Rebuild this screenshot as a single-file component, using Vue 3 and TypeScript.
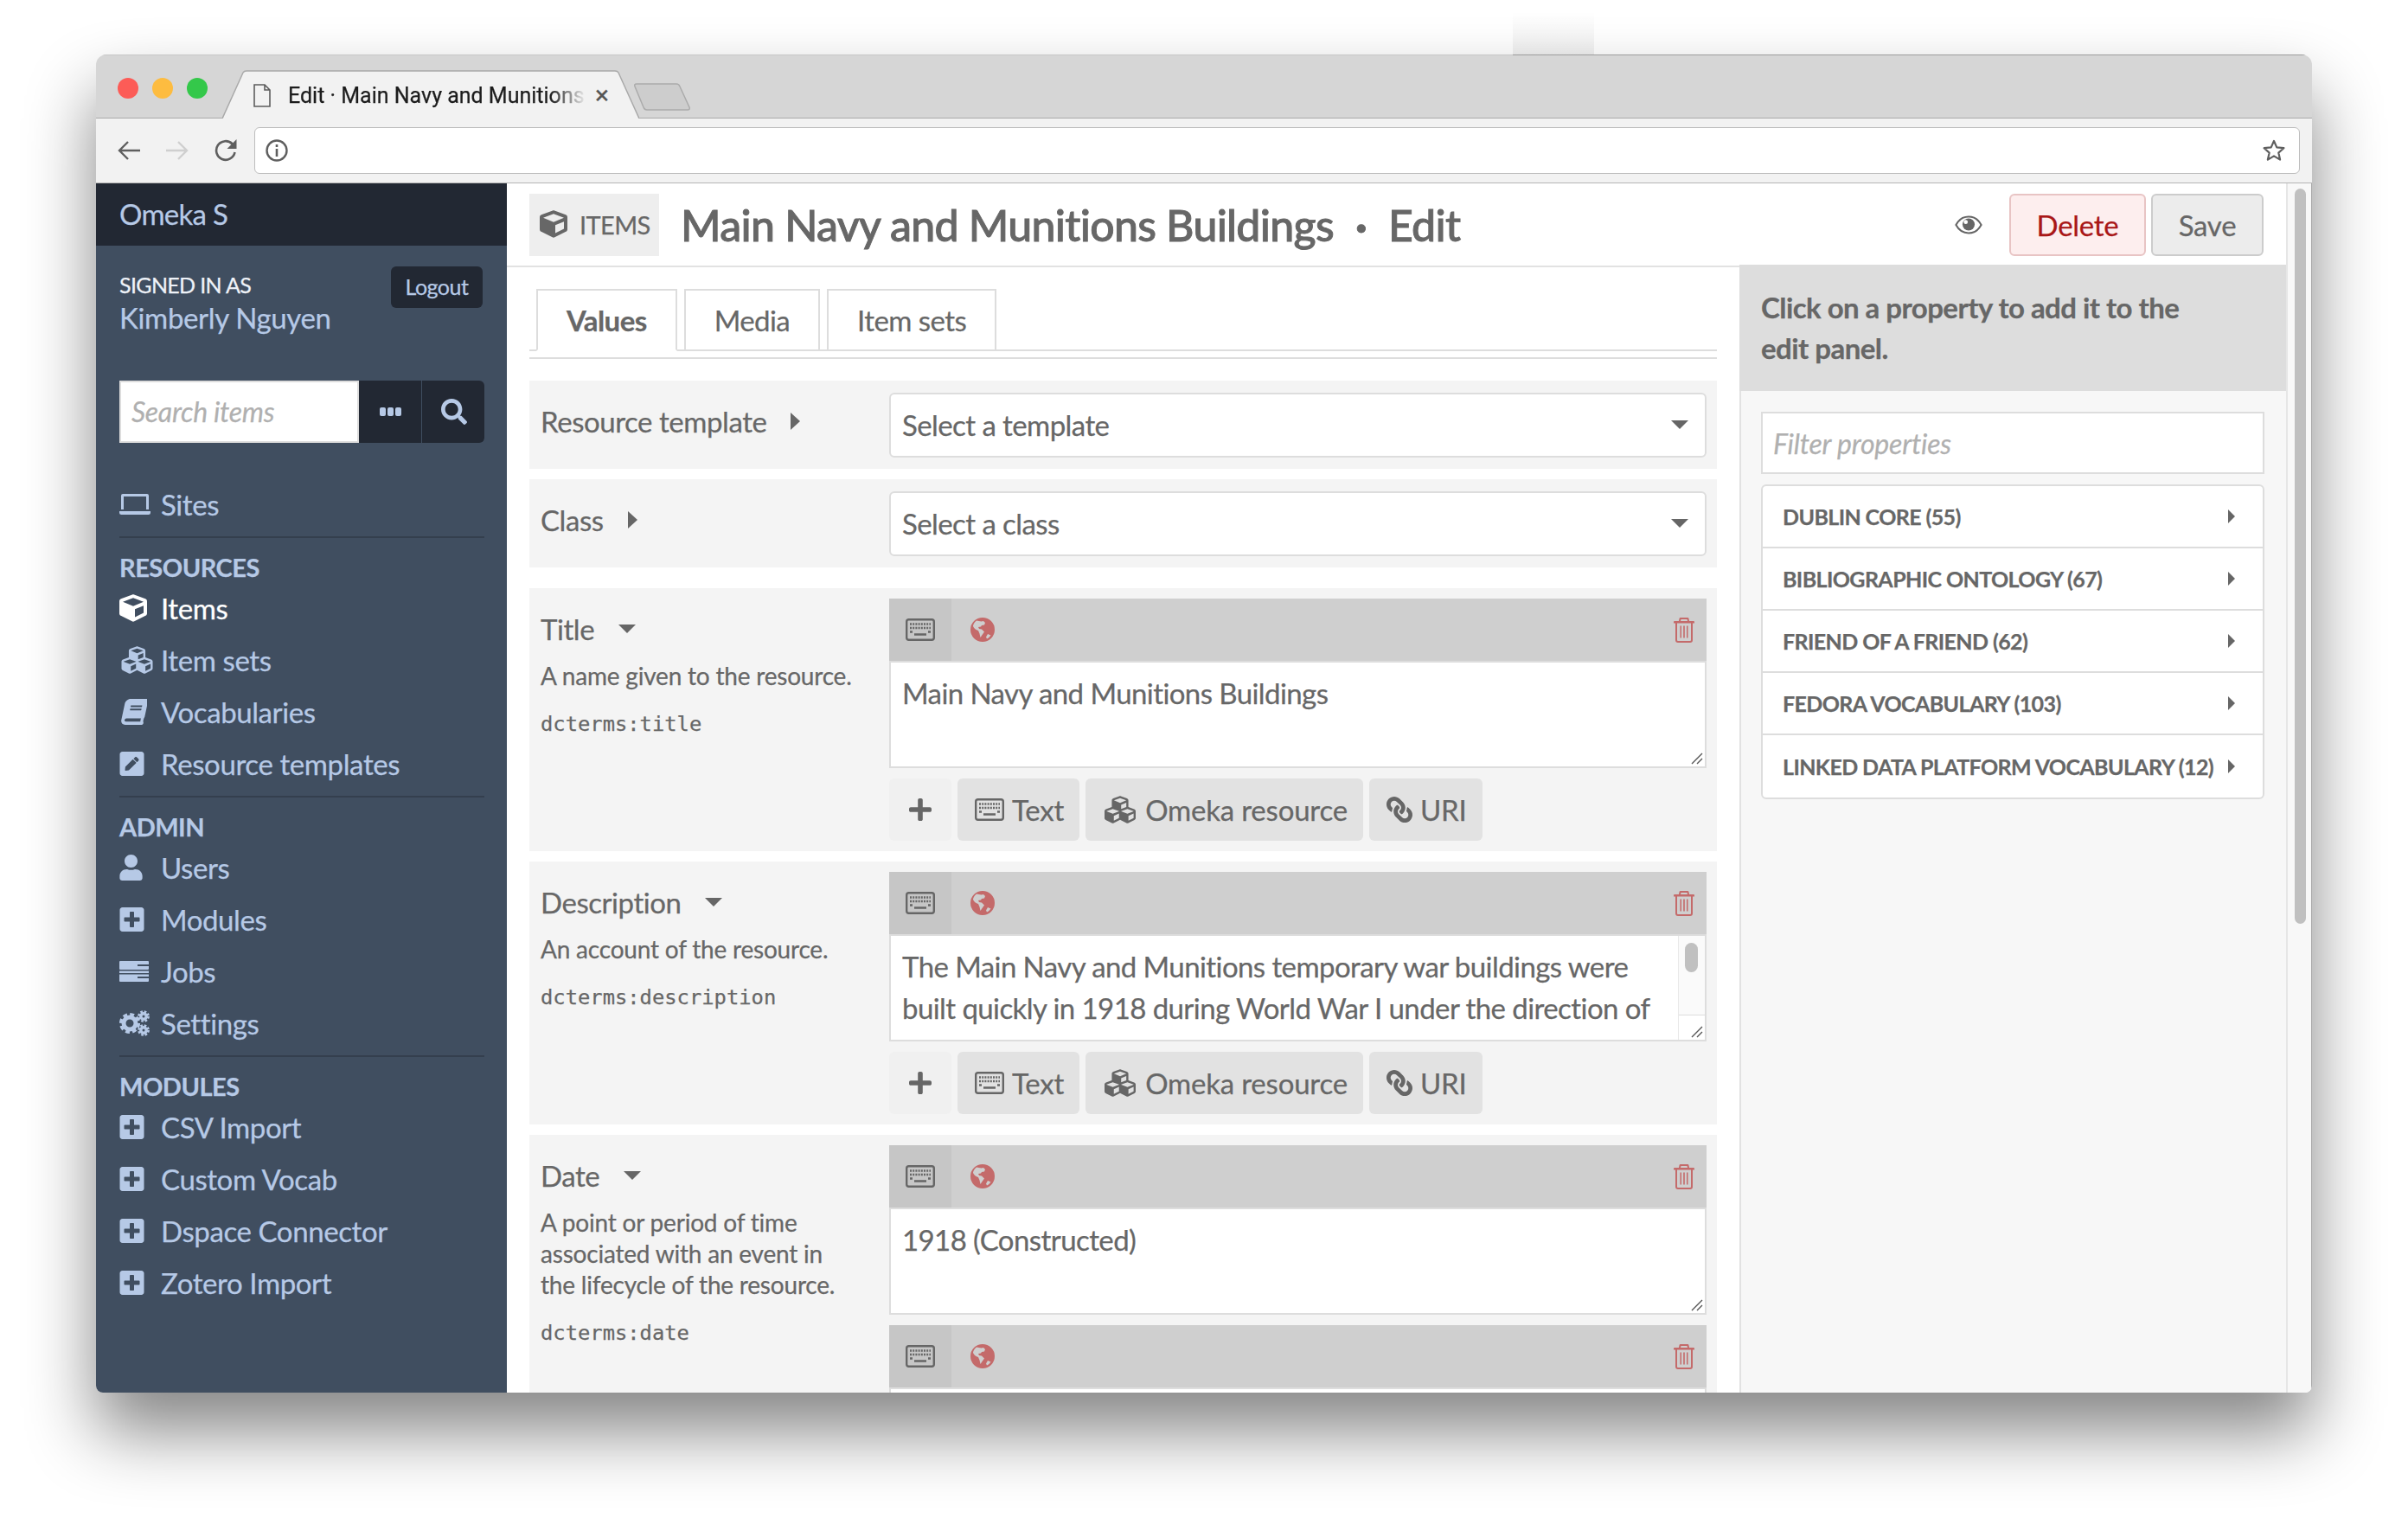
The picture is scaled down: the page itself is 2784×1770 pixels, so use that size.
<script setup lang="ts">
interface NavItem {
  label: string
  icon: string
  active?: boolean
}

interface NavGroup {
  title?: string
  items: NavItem[]
}

interface Field {
  label: string
  desc: string[]
  term: string
  values: string[][]
  scroll?: boolean
  noButtons?: boolean
}

const navGroups: NavGroup[] = [
  { items: [{ label: 'Sites', icon: 'laptop' }] },
  {
    title: 'Resources',
    items: [
      { label: 'Items', icon: 'cube', active: true },
      { label: 'Item sets', icon: 'cubes' },
      { label: 'Vocabularies', icon: 'book' },
      { label: 'Resource templates', icon: 'pen' },
    ],
  },
  {
    title: 'Admin',
    items: [
      { label: 'Users', icon: 'user' },
      { label: 'Modules', icon: 'plus-square' },
      { label: 'Jobs', icon: 'server' },
      { label: 'Settings', icon: 'cogs' },
    ],
  },
  {
    title: 'Modules',
    items: [
      { label: 'CSV Import', icon: 'plus-square' },
      { label: 'Custom Vocab', icon: 'plus-square' },
      { label: 'Dspace Connector', icon: 'plus-square' },
      { label: 'Zotero Import', icon: 'plus-square' },
    ],
  },
]

const fields: Field[] = [
  {
    label: 'Title',
    desc: ['A name given to the resource.'],
    term: 'dcterms:title',
    values: [['Main Navy and Munitions Buildings']],
  },
  {
    label: 'Description',
    desc: ['An account of the resource.'],
    term: 'dcterms:description',
    values: [
      [
        'The Main Navy and Munitions temporary war buildings were',
        'built quickly in 1918 during World War I under the direction of',
      ],
    ],
    scroll: true,
  },
  {
    label: 'Date',
    desc: ['A point or period of time', 'associated with an event in', 'the lifecycle of the resource.'],
    term: 'dcterms:date',
    values: [['1918 (Constructed)'], ['']],
    noButtons: true,
  },
]

const vocabularies = [
  'Dublin Core (55)',
  'Bibliographic Ontology (67)',
  'Friend of a Friend (62)',
  'Fedora Vocabulary (103)',
  'Linked Data Platform Vocabulary (12)',
]

const tabs = ['Values', 'Media', 'Item sets']
</script>

<template>
  <div class="page">
    <svg class="defs" width="0" height="0" aria-hidden="true">
      <symbol id="i-cube" viewBox="0 0 512 512">
        <path d="M239.1 6.3l-208 78c-18.7 7-31.1 25-31.1 45v225.1c0 18.2 10.3 34.8 26.5 42.9l208 104c13.5 6.8 29.4 6.8 42.9 0l208-104c16.3-8.1 26.5-24.8 26.5-42.9V129.3c0-20-12.4-37.9-31.1-44.9l-208-78C262 2.2 250 2.2 239.1 6.3zM256 68.4l192 72v1.1l-192 78-192-78v-1.1l192-72zm32 356V275.5l160-65v133.9l-160 80z" />
      </symbol>
      <symbol id="i-cubes" viewBox="0 0 512 512">
        <path d="M488.6 250.2L392 214V105.5c0-15-9.3-28.4-23.4-33.7l-100-37.5c-8.1-3.1-17.1-3.1-25.3 0l-100 37.5c-14.1 5.3-23.4 18.7-23.4 33.7V214l-96.6 36.2C9.3 255.5 0 268.9 0 283.9V394c0 13.6 7.7 26.1 19.9 32.2l100 50c10.1 5.1 22.1 5.1 32.2 0l103.9-52 103.9 52c10.1 5.1 22.1 5.1 32.2 0l100-50c12.2-6.1 19.9-18.6 19.9-32.2V283.9c0-15-9.3-28.4-23.4-33.7zM358 214.8l-85 31.9v-68.2l85-37v73.3zM154 104.1l102-38.2 102 38.2v.6l-102 41.4-102-41.4v-.6zm84 291.1l-85 42.5v-79.1l85-38.8v75.4zm0-112l-102 41.4-102-41.4v-.6l102-38.2 102 38.2v.6zm240 112l-85 42.5v-79.1l85-38.8v75.4zm0-112l-102 41.4-102-41.4v-.6l102-38.2 102 38.2v.6z" />
      </symbol>
      <symbol id="i-book" viewBox="0 0 512 512">
        <path transform="translate(110 0) skewX(-12)" d="M448 360V24c0-13.3-10.7-24-24-24H96C43 0 0 43 0 96v320c0 53 43 96 96 96h328c13.3 0 24-10.7 24-24v-16c0-7.5-3.5-14.3-8.9-18.7-4.2-15.4-4.2-59.3 0-74.7 5.4-4.3 8.9-11.1 8.9-18.6zM128 134c0-3.3 2.7-6 6-6h212c3.3 0 6 2.7 6 6v20c0 3.3-2.7 6-6 6H134c-3.3 0-6-2.7-6-6v-20zm0 64c0-3.3 2.7-6 6-6h212c3.3 0 6 2.7 6 6v20c0 3.3-2.7 6-6 6H134c-3.3 0-6-2.7-6-6v-20zm253.4 250H96c-17.7 0-32-14.3-32-32 0-17.6 14.4-32 32-32h285.4c-1.9 17.1-1.9 46.9 0 64z" />
      </symbol>
      <symbol id="i-pen" viewBox="0 0 448 512">
        <path d="M400 480H48c-26.5 0-48-21.5-48-48V80c0-26.5 21.5-48 48-48h352c26.5 0 48 21.5 48 48v352c0 26.5-21.5 48-48 48zM238.1 177.9L102.4 313.6l-6.3 57.1c-.8 7.6 5.6 14.1 13.3 13.3l57.1-6.3L302.2 242c2.3-2.3 2.3-6.1 0-8.5L246.7 178c-2.5-2.4-6.3-2.4-8.6-.1zM345 165.1L314.9 135c-9.4-9.4-24.6-9.4-33.9 0l-23.1 23.1c-2.3 2.3-2.3 6.1 0 8.5l55.5 55.5c2.3 2.3 6.1 2.3 8.5 0L345 199c9.3-9.3 9.3-24.5 0-33.9z" />
      </symbol>
      <symbol id="i-user" viewBox="0 0 448 512">
        <path d="M224 256c70.7 0 128-57.3 128-128S294.7 0 224 0 96 57.3 96 128s57.3 128 128 128zm89.6 32h-16.7c-22.2 10.2-46.9 16-72.9 16s-50.6-5.8-72.9-16h-16.7C60.2 288 0 348.2 0 422.4V464c0 26.5 21.5 48 48 48h352c26.5 0 48-21.5 48-48v-41.6c0-74.2-60.2-134.4-134.4-134.4z" />
      </symbol>
      <symbol id="i-plus-square" viewBox="0 0 448 512">
        <path d="M400 32H48C21.5 32 0 53.5 0 80v352c0 26.5 21.5 48 48 48h352c26.5 0 48-21.5 48-48V80c0-26.5-21.5-48-48-48zm-32 252c0 6.6-5.4 12-12 12h-92v92c0 6.6-5.4 12-12 12h-56c-6.6 0-12-5.4-12-12v-92H92c-6.6 0-12-5.4-12-12v-56c0-6.6 5.4-12 12-12h92v-92c0-6.6 5.4-12 12-12h56c6.6 0 12 5.4 12 12v92h92c6.6 0 12 5.4 12 12v56z" />
      </symbol>
      <symbol id="i-search" viewBox="0 0 512 512">
        <path d="M505 442.7L405.3 343c-4.5-4.5-10.6-7-17-7H372c27.6-35.3 44-79.7 44-128C416 93.1 322.9 0 208 0S0 93.1 0 208s93.1 208 208 208c48.3 0 92.7-16.4 128-44v16.3c0 6.4 2.5 12.5 7 17l99.7 99.7c9.4 9.4 24.6 9.4 33.9 0l28.3-28.3c9.4-9.4 9.4-24.6.1-34zM208 336c-70.7 0-128-57.2-128-128 0-70.7 57.2-128 128-128 70.7 0 128 57.2 128 128 0 70.7-57.2 128-128 128z" />
      </symbol>
      <symbol id="i-plus" viewBox="0 0 448 512">
        <path d="M416 208H272V64c0-17.67-14.33-32-32-32h-32c-17.67 0-32 14.33-32 32v144H32c-17.67 0-32 14.33-32 32v32c0 17.67 14.33 32 32 32h144v144c0 17.67 14.33 32 32 32h32c17.67 0 32-14.33 32-32V304h144c17.67 0 32-14.33 32-32v-32c0-17.67-14.33-32-32-32z" />
      </symbol>
      <symbol id="i-link" viewBox="0 0 512 512">
        <path transform="matrix(-1 0 0 1 512 0)" d="M326.612 185.391c59.747 59.809 58.927 155.698.36 214.59-.11.12-.24.25-.36.37l-67.2 67.2c-59.27 59.27-155.699 59.262-214.96 0-59.27-59.26-59.27-155.7 0-214.96l37.106-37.106c9.84-9.84 26.786-3.3 27.294 10.606.648 17.722 3.826 35.527 9.69 52.721 1.986 5.822.567 12.262-3.783 16.612l-13.087 13.087c-28.026 28.026-28.905 73.66-1.155 101.96 28.024 28.579 74.086 28.749 102.325.51l67.2-67.19c28.191-28.191 28.073-73.757 0-101.83-3.701-3.694-7.429-6.564-10.341-8.569a16.037 16.037 0 0 1-6.947-12.606c-.396-10.567 3.348-21.456 11.698-29.806l21.054-21.055c5.521-5.521 14.182-6.199 20.584-1.731a152.482 152.482 0 0 1 20.522 17.197zM467.547 44.449c-59.261-59.262-155.69-59.27-214.96 0l-67.2 67.2c-.12.12-.25.25-.36.37-58.566 58.892-59.387 154.781.36 214.59a152.454 152.454 0 0 0 20.521 17.196c6.402 4.468 15.064 3.789 20.584-1.731l21.054-21.055c8.35-8.35 12.094-19.239 11.698-29.806a16.037 16.037 0 0 0-6.947-12.606c-2.912-2.005-6.64-4.875-10.341-8.569-28.073-28.073-28.191-73.639 0-101.83l67.2-67.19c28.239-28.239 74.3-28.069 102.325.51 27.75 28.3 26.872 73.934-1.155 101.96l-13.087 13.087c-4.35 4.35-5.769 10.79-3.783 16.612 5.864 17.194 9.042 34.999 9.69 52.721.509 13.906 17.454 20.446 27.294 10.606l37.106-37.106c59.271-59.259 59.271-155.699.001-214.959z" />
      </symbol>
      <symbol id="i-laptop" viewBox="0 0 36 24">
        <path d="M4 0h28a2 2 0 0 1 2 2v16h-3V3H5v15H2V2a2 2 0 0 1 2-2zM0 20h36v1.500A2.500 2.500 0 0 1 33.500 24h-31A2.500 2.500 0 0 1 0 21.500z" />
      </symbol>
      <symbol id="i-server" viewBox="0 0 34 24">
        <path d="M1 0h32a1 1 0 0 1 1 1v3H21v2h13v3a1 1 0 0 1-1 1H1a1 1 0 0 1-1-1V1a1 1 0 0 1 1-1zM0 11.500h34V14H0zM0 15.500h34V18H21v2h13v3a1 1 0 0 1-1 1H1a1 1 0 0 1-1-1z" />
      </symbol>
      <symbol id="i-cogs" viewBox="0 0 36 30">
        <circle cx="12" cy="15" r="7" fill="none" stroke="currentColor" stroke-width="5" />
        <circle cx="12" cy="15" r="10.200" fill="none" stroke="currentColor" stroke-width="3.800" stroke-dasharray="4.800 3.200" />
        <circle cx="28" cy="7" r="3.200" fill="none" stroke="currentColor" stroke-width="3.400" />
        <circle cx="28" cy="7" r="5.600" fill="none" stroke="currentColor" stroke-width="2.600" stroke-dasharray="2.600 1.800" />
        <circle cx="28" cy="23" r="3.200" fill="none" stroke="currentColor" stroke-width="3.400" />
        <circle cx="28" cy="23" r="5.600" fill="none" stroke="currentColor" stroke-width="2.600" stroke-dasharray="2.600 1.800" />
      </symbol>
      <symbol id="i-keyboard" viewBox="0 0 34 26">
        <rect x="1.200" y="1.200" width="31.600" height="23.600" rx="2.500" fill="none" stroke="currentColor" stroke-width="2.400" />
        <path d="M5 6.500h24M5 11h24" fill="none" stroke="currentColor" stroke-width="2.500" stroke-dasharray="2 1.200" />
        <path d="M5 15.500h3M26 15.500h3M10 18.500h14" fill="none" stroke="currentColor" stroke-width="2.500" />
      </symbol>
      <symbol id="i-globe" viewBox="0 0 28 28">
        <path fill-rule="evenodd" d="M14 0a14 14 0 1 1 0 28a14 14 0 0 1 0-28zM7 3.500C4.500 5.500 3 8 3 10c1 2.500 3.500 4.500 6 5l1.500 3.500 1 4.500 2-3 2.500-3.500-3-3-3-.5-1-2 3-.5 1-1.500 3-.5 1-2.500-2-2-2.500.5zM20 19l-2 3.500 1 2c2-1 3.500-2.500 4.500-4z" />
      </symbol>
      <symbol id="i-trash" viewBox="0 0 24 30">
        <path d="M8 1h8a1.500 1.500 0 0 1 1.500 1.300l.5 2.700h5a1 1 0 0 1 1 1v1.500H22V27a3 3 0 0 1-3 3H5a3 3 0 0 1-3-3V7.500H0V6a1 1 0 0 1 1-1h5l.5-2.700A1.500 1.500 0 0 1 8 1zm.5 2L8 5h8l-.5-2zM4 7.500V27a1 1 0 0 0 1 1h14a1 1 0 0 0 1-1V7.500zM7.500 10.500h1.500v14H7.500zM11.200 10.500h1.600v14h-1.600zM15 10.500h1.500v14H15z" />
      </symbol>
    </svg>

    <div class="top-smudge"></div>

    <div class="window">
      <div class="tabstrip">
        <div class="lights">
          <span class="light red"></span>
          <span class="light yellow"></span>
          <span class="light green"></span>
        </div>
        <div class="browser-tab">
          <svg class="tab-shape" viewBox="0 0 482 56" preserveAspectRatio="none">
            <path d="M0 56 L24 3 Q25 1 28 1 L454 1 Q457 1 458 3 L482 56" fill="#f2f2f2" stroke="#a9a9a9" stroke-width="1.500" />
          </svg>
          <svg class="file-icon" viewBox="0 0 20 27">
            <path d="M1 1h12l6 6v19H1zM13 1v6h6" fill="none" stroke="#5c5c5c" stroke-width="1.600" />
          </svg>
          <span class="tab-title">Edit · Main Navy and Munitions</span>
          <span class="tab-close">×</span>
        </div>
        <svg class="new-tab" viewBox="0 0 66 32">
          <path d="M3 1h46q3 0 4 3l11 24q1 3-2 3H15q-3 0-4-3L1 4q-1-3 2-3z" fill="#cdcdcd" stroke="#ababab" stroke-width="1.500" />
        </svg>
      </div>

      <div class="toolbar">
        <svg class="nav-btn" viewBox="0 0 28 24">
          <path d="M27 12H3M13 2 3 12l10 10" fill="none" stroke="#5f5f5f" stroke-width="2.400" />
        </svg>
        <svg class="nav-btn" viewBox="0 0 28 24">
          <path d="M1 12h24M15 2l10 10-10 10" fill="none" stroke="#cfcfcf" stroke-width="2.400" />
        </svg>
        <svg class="nav-btn reload" viewBox="0 0 28 28">
          <path d="M24.500 16a10.800 10.800 0 1 1-2.800-9.500L24 9" fill="none" stroke="#5f5f5f" stroke-width="2.600" />
          <path d="M26.500 1v11H15.500z" fill="#5f5f5f" />
        </svg>
        <div class="omnibox">
          <svg class="info" viewBox="0 0 26 26">
            <circle cx="13" cy="13" r="11.500" fill="none" stroke="#5f5f5f" stroke-width="2.400" />
            <path d="M11.700 6h2.600v3h-2.600zM11.700 11h2.600v9h-2.600z" fill="#5f5f5f" />
          </svg>
          <svg class="star" viewBox="0 0 28 28">
            <path d="M14 3l3.300 7.400 8.100.8-6.100 5.400 1.800 8L14 20.400l-7.100 4.200 1.800-8-6.100-5.400 8.100-.8z" fill="none" stroke="#5f5f5f" stroke-width="2.200" stroke-linejoin="round" />
          </svg>
        </div>
      </div>

      <div class="app">
        <aside class="sidebar">
          <div class="brand">Omeka S</div>
          <div class="user">
            <div>
              <div class="signed">Signed in as</div>
              <div class="username">Kimberly Nguyen</div>
            </div>
            <button class="logout">Logout</button>
          </div>
          <div class="search">
            <div class="search-input">Search items</div>
            <div class="search-more"><span></span><span></span><span></span></div>
            <div class="search-go"><svg class="ic-search"><use href="#i-search" /></svg></div>
          </div>
          <nav class="nav">
            <div v-for="(group, i) in navGroups" :key="i" class="nav-group">
              <h4 v-if="group.title" class="nav-title">{{ group.title }}</h4>
              <a v-for="item in group.items" :key="item.label" class="nav-item" :class="{ active: item.active }">
                <span class="nav-icon"><svg :class="'ic-' + item.icon"><use :href="'#i-' + item.icon" /></svg></span>
                {{ item.label }}
              </a>
            </div>
          </nav>
        </aside>

        <div class="main">
          <header class="topbar">
            <div class="badge"><svg class="ic-badge"><use href="#i-cube" /></svg>Items</div>
            <h1 class="title">Main Navy and Munitions Buildings<span class="dot">·</span>Edit</h1>
            <svg class="eye" viewBox="0 0 34 24">
              <path d="M1.500 12C5 5.500 10.500 2 17 2s12 3.500 15.500 10C29 18.500 23.500 22 17 22S5 18.500 1.500 12z" fill="none" stroke="#666" stroke-width="2.200" />
              <circle cx="17" cy="11.500" r="7.500" fill="#666" />
              <circle cx="13.500" cy="8.500" r="2.500" fill="#fff" />
            </svg>
            <button class="btn-delete">Delete</button>
            <button class="btn-save">Save</button>
          </header>

          <div class="columns">
            <section class="form">
              <div class="tabs">
                <a v-for="(tab, i) in tabs" :key="tab" class="tab" :class="{ current: i === 0 }">{{ tab }}</a>
              </div>

              <div class="row row-select">
                <div class="label-col"><span class="label">Resource template<i class="caret-right"></i></span></div>
                <div class="select">Select a template<i class="caret-down small"></i></div>
              </div>
              <div class="row row-select">
                <div class="label-col"><span class="label">Class<i class="caret-right"></i></span></div>
                <div class="select">Select a class<i class="caret-down small"></i></div>
              </div>

              <div v-for="(field, f) in fields" :key="field.label" class="row row-field" :class="{ first: f === 0 }">
                <div class="label-col">
                  <div class="label field-label">{{ field.label }}<i class="caret-down"></i></div>
                  <p class="desc"><span v-for="line in field.desc" :key="line">{{ line }}<br /></span></p>
                  <code class="term">{{ field.term }}</code>
                </div>
                <div class="values">
                  <div v-for="(value, v) in field.values" :key="v" class="value">
                    <div class="value-head">
                      <span class="lang"><svg class="ic-keyboard"><use href="#i-keyboard" /></svg></span>
                      <svg class="ic-globe"><use href="#i-globe" /></svg>
                      <svg class="ic-trash"><use href="#i-trash" /></svg>
                    </div>
                    <div class="textarea">
                      <div v-for="line in value" :key="line" class="line">{{ line }}</div>
                      <div v-if="field.scroll" class="ta-scroll"><span></span></div>
                      <svg class="grip" viewBox="0 0 16 16">
                        <path d="M15 3 3 15M15 9l-6 6" fill="none" stroke="#555" stroke-width="1.400" />
                      </svg>
                    </div>
                  </div>
                  <div v-if="!field.noButtons" class="add-row">
                    <span class="add plus"><svg class="ic-plus"><use href="#i-plus" /></svg></span>
                    <span class="add"><svg class="ic-keyboard"><use href="#i-keyboard" /></svg>Text</span>
                    <span class="add"><svg class="ic-cubes"><use href="#i-cubes" /></svg>Omeka resource</span>
                    <span class="add"><svg class="ic-link"><use href="#i-link" /></svg>URI</span>
                  </div>
                </div>
              </div>
            </section>

            <aside class="panel">
              <div class="panel-head">Click on a property to add it to the edit panel.</div>
              <div class="panel-body">
                <div class="filter">Filter properties</div>
                <ul class="vocab-list">
                  <li v-for="vocab in vocabularies" :key="vocab" class="vocab">
                    {{ vocab }}<i class="caret-right small"></i>
                  </li>
                </ul>
              </div>
            </aside>
          </div>
        </div>

        <div class="page-scroll"><span></span></div>
      </div>
    </div>
  </div>
</template>

<style>
html,
body {
  margin: 0;
  background: #fff;
}
</style>

<style scoped>
.page {
  position: relative;
  box-sizing: border-box;
  width: 2784px;
  height: 1770px;
  padding: 63px 0 0 111px;
  overflow: hidden;
  background: #fff;
  font-family: Lato, "Liberation Sans", sans-serif;
  color: #676767;
  -webkit-text-stroke: 0.25px currentColor;
}

.defs {
  position: absolute;
}

.top-smudge {
  position: absolute;
  top: 13px;
  left: 1749px;
  width: 94px;
  height: 50px;
  background: linear-gradient(180deg, transparent, rgba(0, 0, 0, 0.06));
}

.window {
  position: relative;
  display: flex;
  flex-direction: column;
  width: 2562px;
  height: 1547px;
  border-radius: 12px 12px 8px 8px;
  background: #fff;
  box-shadow: 0 45px 80px rgba(0, 0, 0, 0.48);
  overflow: hidden;
}

/* browser chrome */
.tabstrip {
  display: flex;
  flex: none;
  align-items: flex-end;
  box-sizing: border-box;
  height: 74px;
  border-bottom: 1px solid #a9a9a9;
  background: linear-gradient(90deg, #c8c8c8 1638px, #9c9c9c 1638px) top / 100% 1px no-repeat, #d6d6d6;
}

.lights {
  display: flex;
  align-self: flex-start;
  gap: 16px;
  margin: 27px 0 0 25px;
}

.light {
  width: 24px;
  height: 24px;
  border-radius: 50%;
}

.light.red {
  background: #fc5c57;
}

.light.yellow {
  background: #fdbc40;
}

.light.green {
  background: #34c84a;
}

.browser-tab {
  position: relative;
  display: flex;
  align-items: center;
  box-sizing: border-box;
  width: 482px;
  height: 56px;
  margin: 0 0 -1px 17px;
  padding: 2px 0 0 36px;
}

.tab-shape {
  position: absolute;
  inset: 0;
  width: 100%;
  height: 100%;
}

.file-icon {
  position: relative;
  width: 20px;
  height: 27px;
  margin-right: 20px;
}

.tab-title {
  position: relative;
  width: 345px;
  overflow: hidden;
  font-family: Roboto, sans-serif;
  font-size: 25px;
  color: #1d1d1d;
  white-space: nowrap;
  -webkit-mask-image: linear-gradient(90deg, #000 88%, transparent);
  mask-image: linear-gradient(90deg, #000 88%, transparent);
}

.tab-close {
  position: relative;
  margin-left: 10px;
  font-family: Roboto, sans-serif;
  font-size: 30px;
  line-height: 1;
  color: #555;
}

.new-tab {
  width: 66px;
  height: 32px;
  margin: 0 0 8px -6px;
}

.toolbar {
  display: flex;
  flex: none;
  align-items: center;
  box-sizing: border-box;
  height: 75px;
  padding: 0 14px 0 24px;
  border-bottom: 1px solid #b5b5b5;
  background: #f2f2f2;
}

.nav-btn {
  width: 28px;
  height: 26px;
  margin-right: 28px;
}

.nav-btn.reload {
  height: 28px;
}

.omnibox {
  display: flex;
  flex: 1;
  align-items: center;
  justify-content: space-between;
  box-sizing: border-box;
  height: 54px;
  margin-left: -9px;
  padding: 0 15px 0 12px;
  border: 1px solid #bdbdbd;
  border-radius: 6px;
  background: #fff;
}

.info {
  width: 26px;
  height: 26px;
}

.star {
  width: 28px;
  height: 28px;
}

.app {
  display: flex;
  flex: 1;
  min-height: 0;
}

/* sidebar */
.sidebar {
  flex: none;
  box-sizing: border-box;
  width: 475px;
  background: #404e60;
  color: #b6c9e6;
}

.brand {
  height: 72px;
  padding-left: 27px;
  background: #222833;
  font-size: 33px;
  letter-spacing: -0.7px;
  line-height: 70px;
}

.user {
  display: flex;
  justify-content: space-between;
  height: 156px;
  padding: 24px 28px 0 27px;
  box-sizing: border-box;
}

.signed {
  margin-top: 4px;
  font-size: 25px;
  letter-spacing: -0.65px;
  line-height: 34px;
  color: #eef2f8;
  text-transform: uppercase;
}

.username {
  margin-top: 1px;
  font-size: 33px;
  letter-spacing: -0.35px;
  line-height: 40px;
}

.logout {
  width: 106px;
  height: 48px;
  padding: 0 0 3px;
  border: 0;
  border-radius: 6px;
  background: #222833;
  color: #b6c9e6;
  font-family: inherit;
  font-size: 25px;
  letter-spacing: -0.5px;
}

.search {
  display: flex;
  height: 72px;
  margin: 0 26px 0 27px;
}

.search-input {
  box-sizing: border-box;
  width: 278px;
  padding-left: 12px;
  border: 2px solid #ddd;
  background: #fff;
  color: #b0b0b0;
  font-size: 32px;
  font-style: italic;
  letter-spacing: -0.3px;
  line-height: 68px;
}

.search-more,
.search-go {
  display: flex;
  align-items: center;
  justify-content: center;
  background: #222833;
}

.search-more {
  gap: 2px;
  width: 73px;
  margin-right: 1px;
}

.search-more span {
  width: 7px;
  height: 10px;
  border-radius: 2px;
  background: #b6c9e6;
}

.search-go {
  width: 70px;
  padding-left: 2px;
  border-radius: 0 6px 6px 0;
}

.ic-search {
  width: 30px;
  height: 30px;
  fill: #b6c9e6;
}

.nav {
  padding: 41px 26px 0 27px;
}

.nav-group {
  padding-bottom: 7px;
  border-bottom: 2px solid #343f4e;
}

.nav-group:last-child {
  border-bottom: 0;
}

.nav-title {
  box-sizing: border-box;
  height: 51px;
  margin: 0;
  padding-top: 14px;
  font-size: 29px;
  font-weight: 700;
  letter-spacing: -0.5px;
  line-height: 39px;
  text-transform: uppercase;
}

.nav-item {
  display: flex;
  align-items: center;
  height: 60px;
  font-size: 33px;
  letter-spacing: -0.4px;
}

.nav-item.active {
  color: #fff;
}

.nav-icon {
  display: flex;
  flex: none;
  align-items: center;
  width: 48px;
  height: 36px;
}

.nav-icon svg {
  fill: currentColor;
}

.ic-laptop {
  width: 36px;
  height: 24px;
}

.ic-cube {
  width: 32px;
  height: 32px;
}

.ic-cubes {
  width: 41px;
  height: 36px;
}

.ic-book {
  width: 32px;
  height: 30px;
}

.ic-pen,
.ic-plus-square {
  width: 29px;
  height: 32px;
}

.ic-user {
  width: 27px;
  height: 30px;
}

.ic-server {
  width: 34px;
  height: 24px;
}

.ic-cogs {
  width: 36px;
  height: 30px;
}

/* header */
.main {
  display: flex;
  flex: 1;
  flex-direction: column;
  min-width: 0;
}

.topbar {
  display: flex;
  flex: none;
  align-items: center;
  box-sizing: border-box;
  height: 97px;
  padding: 1px 26px 0;
  border-bottom: 2px solid #e2e2e2;
}

.badge {
  display: flex;
  align-items: center;
  box-sizing: border-box;
  width: 150px;
  height: 72px;
  padding: 0 0 2px 12px;
  background: #eee;
  font-size: 29px;
  letter-spacing: -0.6px;
  text-transform: uppercase;
}

.ic-badge {
  width: 32px;
  height: 32px;
  margin-right: 14px;
  fill: #676767;
}

.title {
  flex: 1;
  margin: 0 0 0 25px;
  font-size: 50px;
  font-weight: 500;
  letter-spacing: -0.7px;
  -webkit-text-stroke: 0.9px currentColor;
  white-space: nowrap;
}

.dot {
  margin: 0 25px;
  font-weight: 700;
}

.eye {
  width: 32px;
  height: 24px;
  margin-right: 31px;
}

.btn-delete,
.btn-save {
  box-sizing: border-box;
  height: 72px;
  border-radius: 6px;
  font-family: inherit;
  font-size: 33px;
  letter-spacing: -0.3px;
}

.btn-delete {
  width: 158px;
  margin-right: 6px;
  border: 2px solid #e8c4c4;
  background: #fdeeee;
  color: #a91717;
}

.btn-save {
  width: 130px;
  border: 2px solid #ccc;
  background: #ececec;
  color: #676767;
}

.columns {
  display: flex;
  flex: 1;
  min-height: 0;
}

/* form */
.form {
  flex: 1;
  min-width: 0;
  padding: 0 26px;
  overflow: hidden;
  letter-spacing: -0.58px;
}

.tabs {
  display: flex;
  gap: 8px;
  height: 70px;
  margin-top: 25px;
  padding: 0 8px;
  border-bottom: 2px solid #ddd;
  box-shadow: 0 7px 0 #fff, 0 9px 0 #ddd;
}

.tab {
  box-sizing: border-box;
  height: 72px;
  padding: 0 33px;
  border: 2px solid #ddd;
  font-size: 33px;
  line-height: 68px;
}

.tab.current {
  border-bottom-color: #fff;
  font-weight: 700;
}

.row {
  display: flex;
  margin-top: 12px;
  background: #f4f4f4;
}

.row-select {
  align-items: flex-start;
  padding: 14px 12px 13px 0;
}

.tabs + .row {
  margin-top: 34px;
}

.row-field {
  padding: 12px 12px 12px 0;
}

.row-field.first {
  margin-top: 24px;
}

.label-col {
  flex: none;
  box-sizing: border-box;
  width: 416px;
  padding-left: 13px;
}

.label {
  display: flex;
  align-items: center;
  font-size: 33px;
  letter-spacing: -0.45px;
  line-height: 42px;
}

.row-select .label {
  margin-top: 12px;
}

.field-label {
  margin-top: 14px;
}

.caret-right,
.caret-down {
  display: inline-block;
  width: 0;
  height: 0;
  border-style: solid;
  border-color: transparent;
}

.caret-right {
  margin-left: 28px;
  border-width: 10px 0 10px 11px;
  border-left-color: #666;
}

.caret-down {
  margin-left: 28px;
  border-width: 10px 10.500px 0;
  border-top-color: #666;
}

.caret-right.small {
  margin: 0 0 0 auto;
  border-width: 8px 0 8px 8px;
}

.caret-down.small {
  margin: 0 0 0 auto;
}

.desc {
  margin: 15px 0 0;
  font-size: 28px;
  letter-spacing: -0.2px;
  line-height: 36px;
}

.term {
  display: block;
  margin-top: 20px;
  font-family: "DejaVu Sans Mono", monospace;
  font-size: 23.800px;
  letter-spacing: 0;
  line-height: 36px;
}

.select {
  display: flex;
  flex: 1;
  align-items: center;
  box-sizing: border-box;
  height: 75px;
  padding: 0 19px 2px 13px;
  border: 2px solid #ddd;
  border-radius: 6px;
  background: #fff;
  font-size: 33px;
}

.values {
  flex: 1;
  min-width: 0;
}

.value + .value {
  margin-top: 12px;
}

.value-head {
  display: flex;
  align-items: center;
  height: 72px;
  background: #cfcfcf;
}

.lang {
  display: flex;
  align-items: center;
  justify-content: center;
  width: 72px;
  height: 72px;
  background: #c6c6c6;
}

.ic-keyboard {
  width: 34px;
  height: 26px;
  fill: #666;
  color: #666;
}

.ic-globe {
  width: 28px;
  height: 28px;
  margin-left: 22px;
  fill: #c46a6a;
}

.ic-trash {
  width: 24px;
  height: 30px;
  margin-left: auto;
  margin-right: 14px;
  fill: #c46a6a;
}

.textarea {
  position: relative;
  box-sizing: border-box;
  height: 124px;
  padding: 11px 13px 0;
  border: 2px solid #ddd;
  background: #fff;
  font-size: 33px;
  line-height: 48px;
  overflow: hidden;
}

.line {
  white-space: nowrap;
}

.grip {
  position: absolute;
  right: 2px;
  bottom: 2px;
  width: 16px;
  height: 16px;
}

.ta-scroll {
  position: absolute;
  top: 0;
  right: 0;
  bottom: 0;
  width: 30px;
  border-left: 1px solid #e8e8e8;
  background: #fafafa;
}

.ta-scroll::after {
  content: "";
  position: absolute;
  right: 0;
  bottom: 0;
  left: 0;
  height: 28px;
  border-top: 1px solid #ddd;
  background: #fff;
}

.ta-scroll span {
  position: absolute;
  top: 8px;
  left: 7px;
  width: 15px;
  height: 34px;
  border-radius: 8px;
  background: #c0c0c0;
}

.add-row {
  display: flex;
  gap: 7px;
  margin-top: 12px;
}

.add {
  display: flex;
  align-items: center;
  gap: 9px;
  box-sizing: border-box;
  height: 72px;
  padding: 0 18px 1px 20px;
  border-radius: 6px;
  background: #e2e2e2;
  font-size: 33px;
  letter-spacing: -0.2px;
  white-space: nowrap;
}

.add.plus {
  justify-content: center;
  width: 72px;
  padding: 0;
  background: #f0f0f0;
}

.ic-plus {
  width: 26px;
  height: 30px;
  fill: #666;
}

.add .ic-cubes {
  width: 40px;
  height: 36px;
  fill: #666;
}

.ic-link {
  width: 30px;
  height: 32px;
  fill: #666;
}

/* right panel */
.panel {
  display: flex;
  flex: none;
  flex-direction: column;
  width: 632px;
  margin-top: -3px;
}

.panel-head {
  box-sizing: border-box;
  height: 146px;
  padding: 26px 100px 0 25px;
  background: #ddd;
  font-size: 33px;
  font-weight: 700;
  letter-spacing: -0.55px;
  line-height: 47px;
}

.panel-body {
  flex: 1;
  padding: 24px 25px 0 23px;
  border-left: 2px solid #e2e2e2;
  background: #f7f7f7;
}

.filter {
  box-sizing: border-box;
  height: 72px;
  padding-left: 12px;
  border: 2px solid #ddd;
  background: #fff;
  color: #b0b0b0;
  font-size: 32px;
  font-style: italic;
  letter-spacing: -0.2px;
  line-height: 70px;
}

.vocab-list {
  margin: 12px 0 0;
  padding: 0;
  border: 2px solid #ddd;
  border-radius: 6px;
  background: #fff;
  list-style: none;
}

.vocab {
  display: flex;
  align-items: center;
  box-sizing: border-box;
  height: 72px;
  padding: 0 32px 1px 23px;
  border-bottom: 2px solid #ddd;
  font-size: 25px;
  font-weight: 700;
  letter-spacing: -0.6px;
  text-transform: uppercase;
  white-space: nowrap;
}

.vocab:last-child {
  border-bottom: 0;
}

.page-scroll {
  flex: none;
  box-sizing: border-box;
  width: 30px;
  padding: 6px 6px 0 8px;
  border-left: 2px solid #e6e6e6;
  border-right: 1px solid #aaa;
  background: #f8f8f8;
}

.page-scroll span {
  display: block;
  height: 850px;
  border-radius: 8px;
  background: #c0c0c0;
}
</style>
